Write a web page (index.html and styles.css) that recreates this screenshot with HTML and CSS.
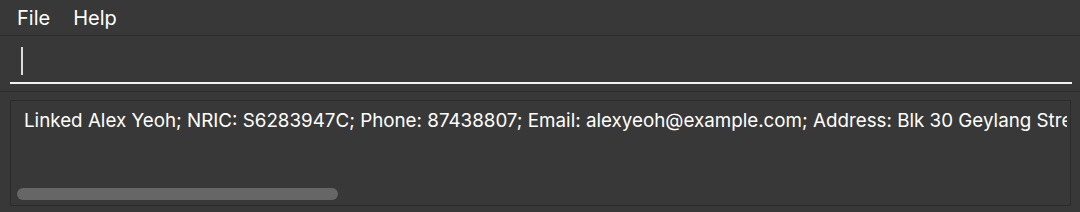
FILE: index.html
```html
<!DOCTYPE html>
<html lang="en">
<head>
  <meta charset="UTF-8">
  <title>AddressBook</title>
  <link rel="stylesheet" href="styles.css">
</head>
<body>
  <div class="menubar">
    <span class="menu-item">File</span>
    <span class="menu-item">Help</span>
  </div>

  <div class="command-pane">
    <div class="command-box">
      <span class="caret"></span>
    </div>
  </div>

  <div class="result-pane">
    <div class="result-box">
      <div class="result-text">Linked Alex Yeoh; NRIC: S6283947C; Phone: 87438807; Email: alexyeoh@example.com; Address: Blk 30 Geylang Street 29, #06-40; Tags: [friends]</div>
      <div class="scrollbar"><div class="thumb"></div></div>
    </div>
  </div>
</body>
</html>
```

FILE: styles.css
```css
body {
  margin: 0;
  background-color: #383838;
  color: white;
  font-family: Inter, "Liberation Sans", Arial, sans-serif;
  height: 212px;
  overflow: hidden;
}
.menubar {
  height: 35px;
  display: flex;
  align-items: center;
  padding-left: 17px;
  gap: 23px;
  border-bottom: 1px solid #2c2c2c;
  font-size: 20px;
}
.command-pane {
  height: 55px;
  padding: 0 8px 0 10px;
  border-bottom: 1px solid #2c2c2c;
}
.command-box {
  height: 48px;
  border-bottom: 2px solid #f2f2f2;
  display: flex;
  align-items: center;
  padding-left: 11px;
  box-sizing: border-box;
}
.caret {
  width: 2px;
  height: 28px;
  background-color: #dcdcdc;
  margin-top: 4px;
}
.result-pane {
  padding: 8px 9px 0 10px;
}
.result-box {
  height: 106px;
  border: 1px solid #2b2b2b;
  box-sizing: border-box;
  padding: 9px 3px 0 13px;
  position: relative;
}
.result-text {
  font-size: 18.8px;
  white-space: nowrap;
  overflow: hidden;
  line-height: 22px;
}
.scrollbar {
  position: absolute;
  left: 6px;
  bottom: 5px;
  width: 321px;
  height: 12px;
}
.thumb {
  height: 100%;
  background-color: #666666;
  border-radius: 6px;
}
```
